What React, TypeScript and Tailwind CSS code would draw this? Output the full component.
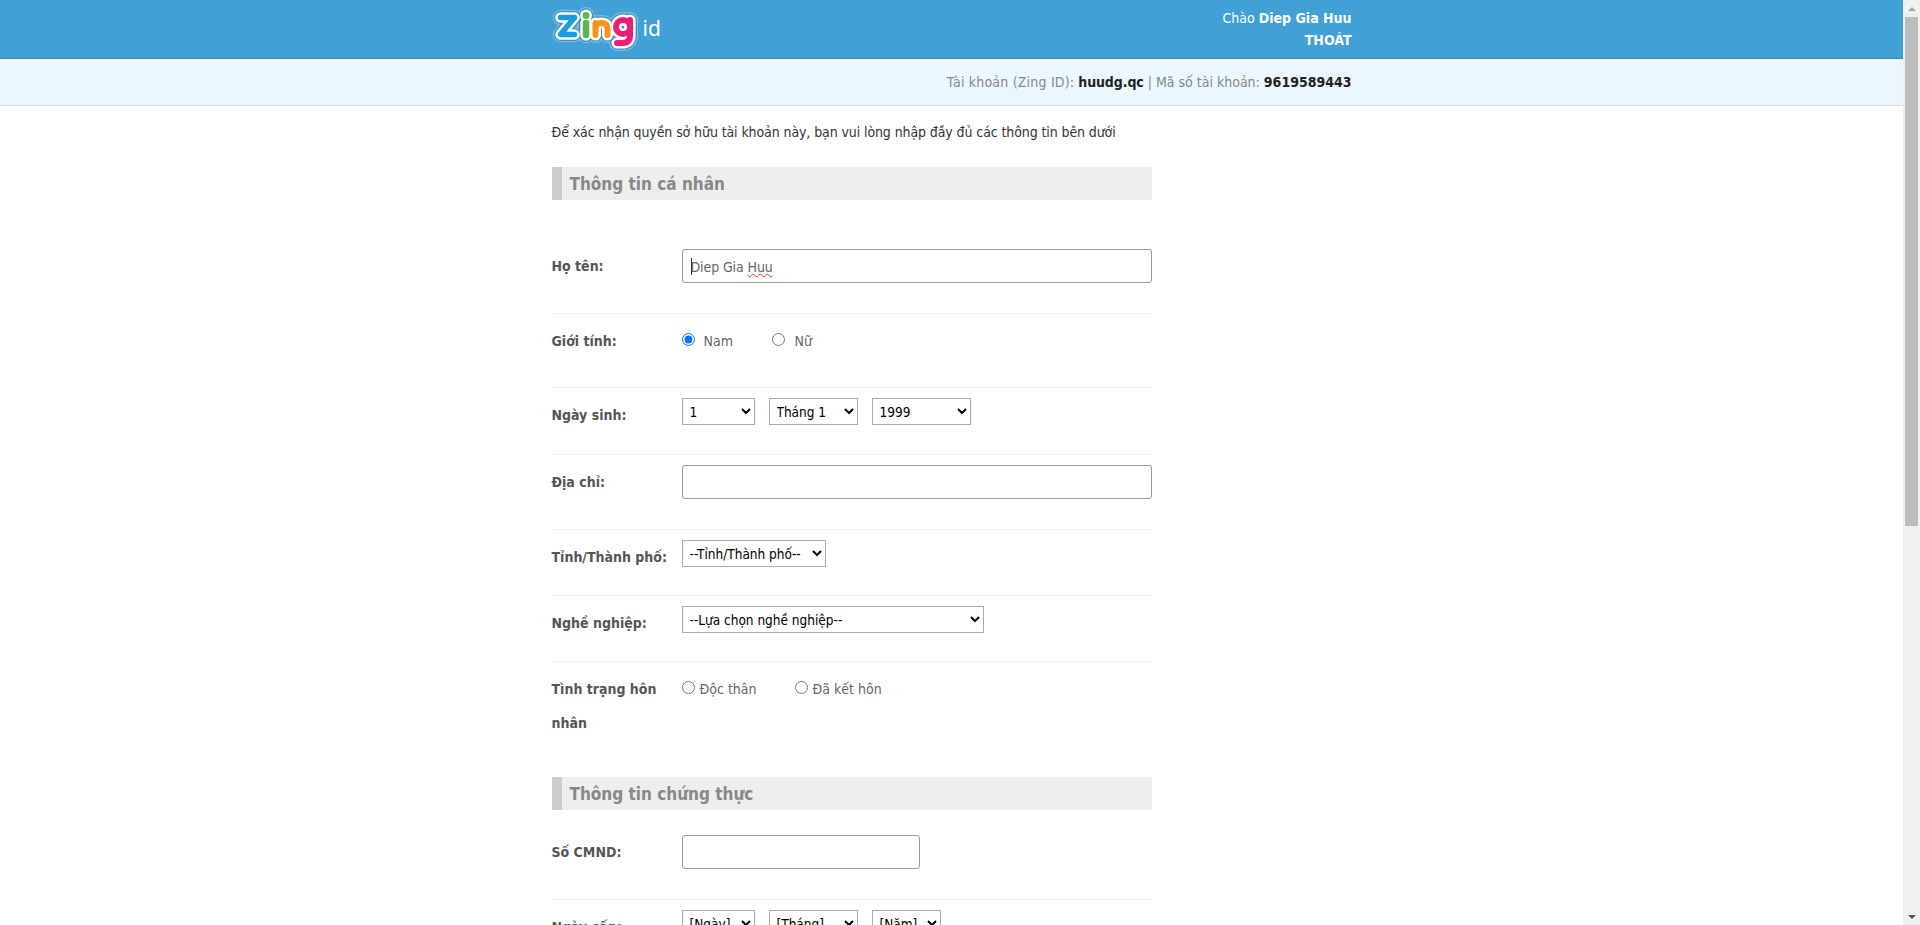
import React from "react";

const font = "font-['DejaVu_Sans_Condensed','DejaVu_Sans',sans-serif]";
const labelCls = "w-[130px] shrink-0 font-bold text-[14px] leading-[34px] text-[#555]";
const textInput = "block h-[34px] border border-[#999] rounded-[3px] bg-white px-2 text-[14px] text-[#666]";
const selectCls = "block h-[27px] border border-[#aaa] bg-white pl-[3px] text-[13.5px] text-black";

function Row({ label, pb, border = true, children }: { label: React.ReactNode; pb: string; border?: boolean; children: React.ReactNode }) {
  return (
    <div className={`flex pt-[10px] ${pb} ${border ? "border-b border-[#eee]" : ""}`}>
      <div className={labelCls}>{label}</div>
      <div className="flex-1 min-w-0">{children}</div>
    </div>
  );
}

function Section({ title }: { title: string }) {
  return (
    <div className="h-[33px] bg-[#eee] border-l-[10px] border-[#ccc] pl-[8px] font-bold text-[17px] leading-[35px] text-[#888]">
      {title}
    </div>
  );
}

function Logo() {
  const shapes = [
    { d: "M8.5 12.5H22.5L8.5 29.5H22.5", c: "#1b9ee0", w: 5.5 },
    { d: "M34 18V30", c: "#5cb947", w: 6.5 },
    { d: "M34 10.5V10.6", c: "#5cb947", w: 7 },
    { d: "M43.5 30V18M43.5 24Q43.5 18 49.5 18Q55.5 18 55.5 24V30", c: "#f7941d", w: 6 },
    { d: "M78 15V31Q78 38 70 38H65", c: "#ec1e79", w: 6 },
    { d: "M78 22A7 7 0 1 0 64 22A7 7 0 1 0 78 22", c: "#ec1e79", w: 6 },
  ];
  return (
    <svg width="88" height="46" viewBox="0 0 88 46" className="block" fill="none" strokeLinecap="round" strokeLinejoin="round">
      {shapes.map((s, i) => <path key={"o" + i} d={s.d} stroke="#7dbbde" strokeWidth={s.w + 10} />)}
      {shapes.map((s, i) => <path key={"d" + i} d={s.d} stroke="#3f8fbe" strokeWidth={s.w + 7.5} />)}
      {shapes.map((s, i) => <path key={"w" + i} d={s.d} stroke="#fff" strokeWidth={s.w + 5} />)}
      {shapes.map((s, i) => <path key={"c" + i} d={s.d} stroke={s.c} strokeWidth={s.w} />)}
    </svg>
  );
}

export default function App() {
  return (
    <div className={`flex h-[925px] w-full overflow-hidden bg-white ${font}`}>
      <div className="flex-1 min-w-0 overflow-hidden">
        <header className="h-[59px] bg-[#41a1d6] border-b border-[#3b82c4]">
          <div className="mx-auto w-[800px] h-full flex justify-between">
            <div className="flex items-start pt-[5px]">
              <Logo />
              <span className="ml-[3px] mt-[9px] font-['Noto_Sans',sans-serif] text-[21px] leading-[28px] text-white">id</span>
            </div>
            <div className="pt-[7px] text-right text-[14px] leading-[22px] text-white">
              <div>Chào <b>Diep Gia Huu</b></div>
              <div><b>THOÁT</b></div>
            </div>
          </div>
        </header>
        <div className="h-[47px] bg-[#ecf6fe] border-b border-[#d5e0e9]">
          <div className="mx-auto w-[800px] text-right text-[14px] leading-[46px] text-[#888]">
            <span className="tracking-[0.2px]">Tài khoản (Zing ID):</span> <b className="text-[#222] tracking-[-0.1px]">huudg.qc</b> | Mã số tài khoản: <b className="text-[#222]">9619589443</b>
          </div>
        </div>
        <main className="mx-auto w-[800px]">
          <div className="w-[600px]">
            <p className="pt-[16px] text-[14px] leading-[20px] tracking-[-0.1px] text-[#333]">
              Để xác nhận quyền sở hữu tài khoản này, bạn vui lòng nhập đầy đủ các thông tin bên dưới
            </p>
            <div className="mt-[25px]"><Section title="Thông tin cá nhân" /></div>
            <div className="pt-[39px]">
              <Row label="Họ tên:" pb="pb-[30px]">
                <div className={`${textInput} w-full leading-[34px] tracking-[-0.1px] relative`}>
                  <span className="absolute left-[8px] top-[8px] h-[17px] w-px bg-[#333]" />
                  Diep Gia <span className="underline decoration-wavy decoration-[#e33] decoration-1">Huu</span>
                </div>
              </Row>
              <Row label="Giới tính:" pb="pb-[29px]">
                <div className="flex items-start h-[34px] text-[14px] leading-[34px] text-[#666]">
                  <input type="radio" name="g" defaultChecked className="m-0 mt-[9px] mr-[9px] w-[13px] h-[13px]" />
                  <span className="w-[68px]">Nam</span>
                  <input type="radio" name="g" className="m-0 mt-[9px] mr-[10px] w-[13px] h-[13px]" />
                  <span>Nữ</span>
                </div>
              </Row>
              <Row label="Ngày sinh:" pb="pb-[22px]">
                <div className="flex gap-[14px]">
                  <select className={`${selectCls} w-[73px]`} defaultValue="1"><option>1</option></select>
                  <select className={`${selectCls} w-[89px]`}><option>Tháng 1</option></select>
                  <select className={`${selectCls} w-[99px]`}><option>1999</option></select>
                </div>
              </Row>
              <Row label="Địa chỉ:" pb="pb-[30px]">
                <input className={`${textInput} w-full`} />
              </Row>
              <Row label="Tỉnh/Thành phố:" pb="pb-[21px]">
                <select className={`${selectCls} w-[144px] h-[26px]`}><option>--Tỉnh/Thành phố--</option></select>
              </Row>
              <Row label="Nghề nghiệp:" pb="pb-[21px]">
                <select className={`${selectCls} w-[302px] h-[26px]`}><option>--Lựa chọn nghề nghiệp--</option></select>
              </Row>
              <Row label={<>Tình trạng hôn<br />nhân</>} pb="pb-0" border={false}>
                <div className="flex items-start h-[34px] text-[14px] leading-[34px] text-[#666]">
                  <input type="radio" name="m" className="m-0 mt-[9px] mr-[5px] w-[13px] h-[13px]" />
                  <span className="w-[95px]">Độc thân</span>
                  <input type="radio" name="m" className="m-0 mt-[9px] mr-[5px] w-[13px] h-[13px]" />
                  <span>Đã kết hôn</span>
                </div>
              </Row>
            </div>
            <div className="mt-[37px]"><Section title="Thông tin chứng thực" /></div>
            <div className="pt-[15px]">
              <Row label="Số CMND:" pb="pb-[30px]">
                <input className={`${textInput} w-[238px]`} />
              </Row>
              <Row label="Ngày cấp:" pb="pb-[22px]" border={false}>
                <div className="flex gap-[14px]">
                  <select className={`${selectCls} w-[73px]`}><option>[Ngày]</option></select>
                  <select className={`${selectCls} w-[89px]`}><option>[Tháng]</option></select>
                  <select className={`${selectCls} w-[69px]`}><option>[Năm]</option></select>
                </div>
              </Row>
            </div>
          </div>
        </main>
      </div>
      <div className="w-[17px] shrink-0 h-full bg-[#f1f1f1] flex flex-col items-center">
        <div className="h-[17px] flex items-center justify-center">
          <div className="w-0 h-0 border-x-[4px] border-x-transparent border-b-[4px] border-b-[#a3a3a3]" />
        </div>
        <div className="w-[13px] h-[509px] bg-[#bcbcbc]" />
        <div className="flex-1" />
        <div className="h-[17px] flex items-center justify-center">
          <div className="w-0 h-0 border-x-[4px] border-x-transparent border-t-[4px] border-t-[#505050]" />
        </div>
      </div>
    </div>
  );
}
